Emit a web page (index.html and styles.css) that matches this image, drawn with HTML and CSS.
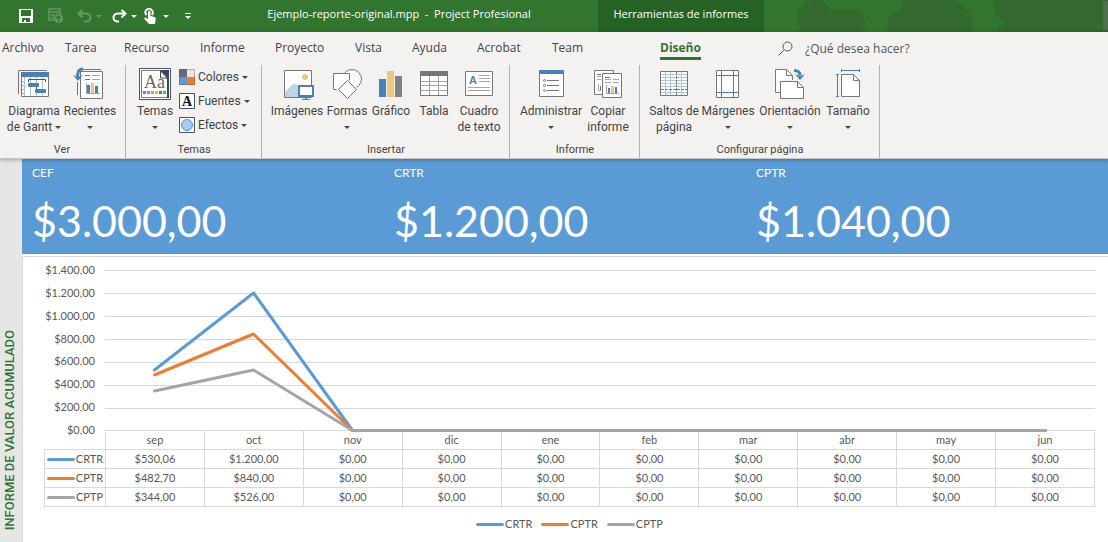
FILE: index.html
```html
<!DOCTYPE html>
<html lang="es">
	<head>
		<meta charset="utf-8">
		<title>Ejemplo-reporte-original.mpp - Project Profesional</title>
		<link rel="stylesheet" href="styles.css">
	</head>
	<body>
		<!--barra de titulo-->
		<header class="titlebar">
			<svg class="deco" width="344" height="32" viewBox="0 0 344 32">
				<g fill="#31692f">
					<circle cx="51" cy="18" r="18"/>
					<circle cx="88" cy="23" r="13"/>
					<path d="M38 28l28-18h20v22H36z"/>
					<path d="M138 0h50c14 4 22 16 20 32h-84c-2-12 0-18 8-19 5-3 10-8 6-13z"/>
					<path d="M229 0c0 9 2 14 6 18l6 5-6 4-2 5h111V0z"/>
				</g>
				<path d="M339 1h5v29h-5z" fill="#4f704f"/>
			</svg>
			<div class="quick">
				<button aria-label="Guardar"><svg width="14" height="14" viewBox="0 0 14 14"><path fill="#fff" fill-rule="evenodd" d="M0 0h14v14H0zM2 1v6h10V1zM3 9v4h2v-2h2v2h4V9z"/></svg></button>
				<button class="off" aria-label="Publicar"><svg width="16" height="16" viewBox="0 0 16 16"><path fill="none" stroke="#fff" stroke-width="1.5" d="M6 12H1V1h11v5M1 4h11M3 7h4M3 9.500h3"/><circle cx="10.500" cy="10.500" r="4.500" fill="#fff"/><path d="M10.500 14V8.500M8 10.500l2.500-2.500 2.500 2.500" stroke="#31752f" stroke-width="1.500" fill="none"/></svg></button>
				<button class="off" aria-label="Deshacer"><svg width="15" height="14" viewBox="0 0 15 14"><path fill="none" stroke="#fff" stroke-width="2" d="M5.500 1L1.500 4.500l4 4M1.500 4.500H9c6 0 6 8 0 8H7"/></svg><i class="caret"></i></button>
				<button aria-label="Rehacer"><svg width="15" height="14" viewBox="0 0 15 14"><path fill="none" stroke="#fff" stroke-width="2" d="M9.500 1l4 3.500-4 4M13.500 4.500H6c-6 0-6 8 0 8h1"/></svg><i class="caret"></i></button>
				<button aria-label="Modo mouse o táctil"><svg width="15" height="16" viewBox="0 0 15 16"><path fill="none" stroke="#fff" stroke-width="2" d="M2.500 7C0 4 2 1 5 1s5 3 3 6"/><path fill="#fff" d="M4 4c0-1.500 2.500-1.500 2.500 0v4l4 1c1 .3 1.500 1 1.200 2L11 16H5l-4.500-5c-.6-1 .8-2 1.800-1L4 11z"/></svg><i class="caret"></i></button>
				<button aria-label="Personalizar"><svg width="6" height="7" viewBox="0 0 6 7"><path fill="#fff" d="M0 0h6v1H0zM0 3h6L3 6z"/></svg></button>
			</div>
			<div class="doc">Ejemplo-reporte-original.mpp&nbsp; -&nbsp; Project Profesional</div>
			<div class="context">Herramientas de informes</div>
		</header>

		<!--cinta-->
		<div class="ribbon">
			<nav class="tabs">
				<a href="#">Archivo</a>
				<a href="#">Tarea</a>
				<a href="#">Recurso</a>
				<a href="#">Informe</a>
				<a href="#">Proyecto</a>
				<a href="#">Vista</a>
				<a href="#">Ayuda</a>
				<a href="#">Acrobat</a>
				<a href="#">Team</a>
				<a href="#" class="active">Diseño</a>
				<label class="search">
					<svg width="15" height="15" viewBox="0 0 15 15" fill="none" stroke="#555"><circle cx="9.500" cy="5.500" r="4.500"/><path d="M6 9l-5.500 5.500"/></svg>
					<input type="text" placeholder="¿Qué desea hacer?" aria-label="¿Qué desea hacer?">
				</label>
			</nav>
			<div class="groups">
				<section class="group">
					<div class="tools ver">
						<button class="tool">
							<svg width="36" height="36" viewBox="0 0 36 36"><path d="M2.500 27V3.500H31" fill="none" stroke="#777"/><path d="M5.500 5.500h27v24h-27z" fill="#fff" stroke="#777"/><path d="M5 5h28v5H5z" fill="#4a80b9"/><path d="M8.500 10v19M6 14.500h2M6 18.500h2M6 22.500h2M6 26.500h2M14.500 10v19M20.500 10v19M26.500 10v19" stroke="#a9c4e0"/><path d="M12.500 15v-2.500h17V15M20.500 20v2" fill="none" stroke="#555"/><rect x="12" y="16" width="11" height="4" rx="1" fill="#4a80b9"/><rect x="19" y="22" width="11" height="4" rx="1" fill="#4a80b9"/></svg>
							<span>Diagrama<br>de Gantt <i class="caret"></i></span>
						</button>
						<button class="tool">
							<svg width="36" height="36" viewBox="0 0 36 36"><path d="M5.500 15v13M11 2.500h18" stroke="#777"/><path d="M8.500 4.500h22v27h-22z" fill="#fff" stroke="#777"/><path d="M13 8.500h5M13 12.500h5" stroke="#4a80b9"/><path d="M20 8.500h8M20 12.500h8M14.500 16v10.500H28" fill="none" stroke="#a6a6a6"/><path d="M15 18h3v8h-3zM23 19h3v7h-3z" fill="#4a80b9"/><path d="M19 16h3v10h-3z" fill="#ecc77c"/><path d="M11 2C6 2 5 6 6 12" fill="none" stroke="#4a80b9" stroke-width="3"/><path d="M1 8l5 6 5-6-5 2z" fill="#4a80b9"/></svg>
							<span>Recientes<br><i class="caret"></i></span>
						</button>
					</div>
					<h2>Ver</h2>
				</section>
				<section class="group">
					<div class="tools temas">
						<button class="tool">
							<svg width="36" height="36" viewBox="0 0 36 36"><path d="M2.500 1.500h31v31h-31z" fill="#fff" stroke="#44546a"/><path d="M4.500 3.500h19l8 8v19h-27z" fill="#fff" stroke="#777"/><path d="M23 3h9v28h-2V12z" fill="#3b4757"/><path d="M23.500 4v7h7z" fill="#fff" stroke="#3b4757"/><text x="7" y="21" font-family="Liberation Serif, serif" font-size="18" fill="#666">Aa</text><path d="M6 24h3v3H6z" fill="#4a90d0"/><path d="M10 24h3v3h-3z" fill="#ed7d31"/><path d="M14 24h3v3h-3z" fill="#a5a5a5"/><path d="M18 24h3v3h-3z" fill="#ffc000"/><path d="M22 24h3v3h-3z" fill="#4472c4"/><path d="M26 24h3v3h-3z" fill="#70ad47"/></svg>
							<span>Temas<br><i class="caret"></i></span>
						</button>
						<div class="small">
							<button><svg width="16" height="16" viewBox="0 0 16 16"><path d="M0 0h8v8H0z" fill="#666b73"/><path d="M8 0h8v8H8z" fill="#e7e6e6"/><path d="M0 8h8v8H0z" fill="#5b9bd5"/><path d="M8 8h8v8H8z" fill="#ed7d31"/><path d="M.5.5h15v15H.5z" fill="none" stroke="#555" stroke-opacity=".4"/></svg><span>Colores</span><i class="caret"></i></button>
							<button><svg width="16" height="16" viewBox="0 0 16 16"><path d="M.5.5h15v15H.5z" fill="#fff" stroke="#44546a"/><text x="3" y="13" font-family="Liberation Serif, serif" font-weight="bold" font-size="14" fill="#111">A</text></svg><span>Fuentes</span><i class="caret"></i></button>
							<button><svg width="16" height="16" viewBox="0 0 16 16"><path d="M.5.5h15v15H.5z" fill="#fff" stroke="#44546a"/><circle cx="8" cy="8" r="5.500" fill="#a9cdf0" stroke="#4a90d0"/></svg><span>Efectos</span><i class="caret"></i></button>
						</div>
					</div>
					<h2>Temas</h2>
				</section>
				<section class="group">
					<div class="tools insertar">
						<button class="tool">
							<svg width="36" height="36" viewBox="0 0 36 36"><path d="M5.500 3.500h27v27h-27z" fill="#fff" stroke="#777"/><circle cx="26" cy="10" r="3" fill="#ecc77c"/><path d="M6 30v-5l8-8 3 0 4 5v8z" fill="#bfd3e9"/><path d="M20 19h14v10H20z" fill="#fff" stroke="#4a80b9" stroke-width="2"/><path d="M26 30h2v2h3v1h-8v-1h3z" fill="#4a80b9"/></svg>
							<span>Imágenes</span>
						</button>
						<button class="tool">
							<svg width="36" height="36" viewBox="0 0 36 36" fill="#fff" stroke="#4a80b9"><circle cx="23" cy="12" r="9.500"/><path d="M4.500 6.500h16v16h-16z"/><path d="M18.500 13.500l9 9-9 9-9-9z" stroke="#f3f2f1" stroke-width="3"/><path d="M18.500 13.500l9 9-9 9-9-9z"/></svg>
							<span>Formas<br><i class="caret"></i></span>
						</button>
						<button class="tool">
							<svg width="36" height="36" viewBox="0 0 36 36"><path d="M6 12h7v18H6z" fill="#4a80b9"/><path d="M14 4h7v26h-7z" fill="#ecc77c"/><path d="M22 9h7v21h-7z" fill="#808080"/></svg>
							<span>Gráfico</span>
						</button>
						<button class="tool">
							<svg width="36" height="36" viewBox="0 0 36 36"><path d="M4.500 4.500h27v24h-27z" fill="#fff" stroke="#777"/><path d="M4 4h28v5H4z" fill="#777"/><path d="M5 14.500h26M5 18.500h26M5 23.500h26M13.500 9v19M22.500 9v19" stroke="#a6a6a6"/></svg>
							<span>Tabla</span>
						</button>
						<button class="tool">
							<svg width="36" height="36" viewBox="0 0 36 36"><path d="M4.500 4.500h27v24h-27z" fill="#fff" stroke="#777"/><text x="8" y="17" font-family="Liberation Sans, sans-serif" font-weight="bold" font-size="11" fill="#4a80b9">A</text><path d="M18 8.500h11M18 11.500h11M18 14.500h11M7 20.500h22M7 23.500h22" stroke="#a6a6a6"/></svg>
							<span>Cuadro<br>de texto</span>
						</button>
					</div>
					<h2>Insertar</h2>
				</section>
				<section class="group">
					<div class="tools informe">
						<button class="tool">
							<svg width="36" height="36" viewBox="0 0 36 36"><path d="M6.500 3.500h24v26h-24z" fill="#fff" stroke="#777"/><path d="M6 3h25v4H6z" fill="#4a80b9"/><path d="M14 13.500h12M14 18.500h12M14 23.500h12" stroke="#777"/><g fill="#fff" stroke="#777"><circle cx="11.500" cy="13.500" r="1"/><circle cx="11.500" cy="18.500" r="1"/><circle cx="11.500" cy="23.500" r="1"/></g></svg>
							<span>Administrar<br><i class="caret"></i></span>
						</button>
						<button class="tool">
							<svg width="36" height="36" viewBox="0 0 36 36"><path d="M4.500 3.500h19v24h-19z" fill="#fff" stroke="#777"/><path d="M7 7.500h4M10.500 23v-4" stroke="#4a80b9"/><path d="M7 9.500h4M7 12.500h4M8.500 17v6.500H11" fill="none" stroke="#a6a6a6"/><path d="M12.500 6.500h19v24h-19z" fill="#fff" stroke="#777"/><path d="M15 10.500h5" stroke="#4a80b9"/><path d="M15 12.500h6M23 12.500h6M15 15.500h6M23 15.500h6M16.500 18v8.500H29" fill="none" stroke="#a6a6a6"/><path d="M18 21h2v5h-2zM25 20h2v6h-2z" fill="#4a80b9"/><path d="M21 19h3v7h-3z" fill="#ecc77c"/></svg>
							<span>Copiar<br>informe</span>
						</button>
					</div>
					<h2>Informe</h2>
				</section>
				<section class="group">
					<div class="tools pagina">
						<button class="tool">
							<svg width="36" height="36" viewBox="0 0 36 36"><path d="M4.500 4.500h27v24h-27z" fill="#fff" stroke="#777"/><path d="M5 7.500h26M5 10.500h26M5 13.500h26M5 16.500h26M5 19.500h26M5 25.500h26M9.500 5v23M14.500 5v23M25.500 5v23" stroke="#a9c4e0"/><path d="M20.500 5v23M5 22.500h26" stroke="#777" stroke-dasharray="3 1"/></svg>
							<span>Saltos de<br>página</span>
						</button>
						<button class="tool">
							<svg width="36" height="36" viewBox="0 0 36 36"><path d="M6.500 3.500h22v27h-22z" fill="#fff" stroke="#777"/><path d="M11.500 4v26M23.500 4v26M7 8.500h21M7 25.500h21" stroke="#4a80b9"/></svg>
							<span>Márgenes<br><i class="caret"></i></span>
						</button>
						<button class="tool">
							<svg width="36" height="36" viewBox="0 0 36 36"><path d="M3.500 2.500h11l6 6v17h-17z" fill="#fff" stroke="#777"/><path d="M14.500 2.500v6h6" fill="none" stroke="#777"/><path d="M7 13h19v4h-19z" fill="#f3f2f1"/><path d="M8.500 14.500h17l6 6v11h-23z" fill="#fff" stroke="#777"/><path d="M25.500 14.500v6h6" fill="none" stroke="#777"/><path d="M22 3.500c4 0 6 1 6 5" fill="none" stroke="#4a80b9" stroke-width="3"/><path d="M23 7l5 6 5-6-5 2z" fill="#4a80b9"/></svg>
							<span>Orientación<br><i class="caret"></i></span>
						</button>
						<button class="tool">
							<svg width="36" height="36" viewBox="0 0 36 36"><path d="M11.500 7.500h12l6 6v16h-18z" fill="#fff" stroke="#777"/><path d="M23.500 7.500v6h6" fill="none" stroke="#777"/><path d="M11.500 2v3M29.500 2v3M11 3.500h18M6 7.500h3M6 29.500h3M7.500 7v22" stroke="#4a80b9"/></svg>
							<span>Tamaño<br><i class="caret"></i></span>
						</button>
					</div>
					<h2>Configurar página</h2>
				</section>
			</div>
		</div>

		<!--informe-->
		<main class="report">
			<aside class="side"><span>INFORME DE VALOR ACUMULADO</span></aside>
			<div class="content">
				<div class="cards">
					<div class="card"><h3>CEF</h3><p>$3.000,00</p></div>
					<div class="card"><h3>CRTR</h3><p>$1.200,00</p></div>
					<div class="card"><h3>CPTR</h3><p>$1.040,00</p></div>
				</div>
				<div class="chart">
					<div class="plot">
						<div class="axis">
							<span>$1.400,00</span>
							<span>$1.200,00</span>
							<span>$1.000,00</span>
							<span>$800,00</span>
							<span>$600,00</span>
							<span>$400,00</span>
							<span>$200,00</span>
							<span>$0,00</span>
						</div>
						<svg class="lines" viewBox="0 0 990 160" preserveAspectRatio="none">
							<path class="grid" d="M0 .5h990M0 23.500h990M0 46.500h990M0 69.500h990M0 92.500h990M0 115.500h990M0 138.500h990"/>
							<polyline stroke="#5b9bd5" points="49.500,100 148.500,23 247.500,160.500 940.500,160.500"/>
							<polyline stroke="#ed7d31" points="49.500,105 148.500,64 247.500,160.500 940.500,160.500"/>
							<polyline stroke="#a5a5a5" points="49.500,121 148.500,100 247.500,160.500 940.500,160.500"/>
						</svg>
					</div>
					<table>
						<thead>
							<tr><td class="empty"></td><th>sep</th><th>oct</th><th>nov</th><th>dic</th><th>ene</th><th>feb</th><th>mar</th><th>abr</th><th>may</th><th>jun</th></tr>
						</thead>
						<tbody>
							<tr><th><span class="key blue">CRTR</span></th><td>$530,06</td><td>$1.200,00</td><td>$0,00</td><td>$0,00</td><td>$0,00</td><td>$0,00</td><td>$0,00</td><td>$0,00</td><td>$0,00</td><td>$0,00</td></tr>
							<tr><th><span class="key orange">CPTR</span></th><td>$482,70</td><td>$840,00</td><td>$0,00</td><td>$0,00</td><td>$0,00</td><td>$0,00</td><td>$0,00</td><td>$0,00</td><td>$0,00</td><td>$0,00</td></tr>
							<tr><th><span class="key gray">CPTP</span></th><td>$344,00</td><td>$526,00</td><td>$0,00</td><td>$0,00</td><td>$0,00</td><td>$0,00</td><td>$0,00</td><td>$0,00</td><td>$0,00</td><td>$0,00</td></tr>
						</tbody>
					</table>
					<div class="legend">
						<span class="key blue">CRTR</span>
						<span class="key orange">CPTR</span>
						<span class="key gray">CPTP</span>
					</div>
				</div>
			</div>
		</main>
	</body>
</html>
```
FILE: styles.css
```css
*{
	box-sizing: border-box;
}
html,body{
	height: 100%;
}
body{
	margin: 0;
	display: flex;
	flex-direction: column;
	font-family: "Open Sans", "Noto Sans", sans-serif;
	font-size: 12px;
	color: #444;
	background: #fff;
}
button{
	border: none;
	background: none;
	padding: 0;
	font: inherit;
	color: inherit;
}
h2,h3,p{
	margin: 0;
	font-weight: normal;
}
svg{
	display: block;
	flex: none;
}
.caret{
	display: inline-block;
	border: 3px solid transparent;
	border-top-color: currentColor;
	border-bottom: none;
	vertical-align: middle;
}

/* barra de titulo */
.titlebar{
	position: relative;
	display: grid;
	grid-template-columns: 200px 398px 166px;
	height: 32px;
	flex: none;
	line-height: 28px;
	font-size: 11px;
	color: #fff;
	background: #31752f;
}
.deco{
	position: absolute;
	right: 0;
	top: 0;
}
.quick{
	display: grid;
	grid-template-columns: 29px 29px 35px 32px 41px 6px;
	align-items: center;
	padding-left: 19px;
}
.quick button{
	display: flex;
	align-items: center;
	gap: 4px;
}
.quick .off{
	opacity: .25;
}
.doc{
	text-align: center;
}
.context{
	position: relative;
	text-align: center;
	background: #256325;
}

/* cinta */
.ribbon{
	position: relative;
	z-index: 2;
	flex: none;
	background: #f3f2f1;
	border-bottom: 1px solid #c8c6c4;
	box-shadow: 0 1px 4px rgba(0,0,0,0.3);
}
.tabs{
	display: grid;
	grid-template-columns: 63px 59px 76px 75px 80px 57px 65px 75px 108px 118px 1fr;
	height: 33px;
	padding-left: 2px;
	line-height: 32px;
}
.tabs a{
	color: inherit;
	text-decoration: none;
}
.tabs .active{
	justify-self: start;
	height: 28px;
	font-weight: bold;
	color: #31752f;
	border-bottom: 3px solid #31752f;
}
.search{
	display: flex;
	align-items: center;
	gap: 12px;
}
.search input{
	flex: 1;
	border: none;
	padding: 0;
	background: none;
	font: inherit;
}
.search input::placeholder{
	color: #555;
	opacity: 1;
}
.groups{
	display: flex;
	font-family: Roboto, "Open Sans", sans-serif;
}
.group{
	border-right: 1px solid #b3b0ad;
	padding: 0 7px 0 8px;
}
.group:first-child{
	padding-left: 6px;
}
.group h2{
	font-size: 11px;
	line-height: 16px;
	text-align: center;
}
.tools{
	display: grid;
	height: 77px;
	padding-top: 2px;
}
.ver{
	grid-template-columns: 56px 56px;
}
.temas{
	grid-template-columns: 42px 78px;
}
.insertar{
	grid-template-columns: 54px 46px 42px 44px 46px;
}
.informe{
	grid-template-columns: 66px 48px;
}
.pagina{
	grid-template-columns: 52px 56px 68px 48px;
}
.tool{
	display: flex;
	flex-direction: column;
	align-items: center;
	line-height: 16px;
	white-space: nowrap;
}
.small{
	padding-left: 3px;
	margin-top: -2px;
}
.small button{
	display: flex;
	align-items: center;
	gap: 3px;
	height: 24px;
}

/* informe */
.report{
	flex: 1;
	display: flex;
	font-family: Lato, "Open Sans", sans-serif;
}
.side{
	width: 22px;
	flex: none;
	display: flex;
	flex-direction: column;
	justify-content: flex-end;
	align-items: center;
	padding: 0 4px 12px 0;
	background: #e6e6e6;
	color: #31752f;
	font-family: Roboto, "Open Sans", sans-serif;
	font-size: 13px;
	font-weight: 500;
}
.side span{
	writing-mode: vertical-rl;
	transform: rotate(180deg);
	white-space: nowrap;
}
.content{
	flex: 1;
	display: flex;
	flex-direction: column;
	gap: 2px;
}
.cards{
	display: grid;
	grid-template-columns: repeat(3, 1fr);
	height: 95px;
	color: #fff;
	background: #5b9bd5;
}
.card{
	padding: 6px 0 0 10px;
}
.card h3{
	font-size: 12px;
	line-height: 16px;
}
.card p{
	font-size: 43px;
	line-height: 80px;
}
.chart{
	flex: 1;
	padding: 13px 13px 0 21px;
	border: 1px solid #d9d9d9;
	border-right: none;
	border-bottom: none;
	font-size: 11px;
	color: #595959;
}
.plot{
	display: flex;
	height: 160px;
}
.axis{
	width: 61px;
	flex: none;
	height: 176px;
	margin-top: -8px;
	padding-right: 10px;
	display: flex;
	flex-direction: column;
	justify-content: space-between;
	line-height: 16px;
	text-align: right;
}
.lines{
	flex: 1;
	min-width: 0;
	height: 160px;
	position: relative;
	overflow: visible;
}
.lines polyline{
	fill: none;
	stroke-width: 3;
	stroke-linecap: round;
	stroke-linejoin: round;
	vector-effect: non-scaling-stroke;
}
.grid{
	stroke: #d9d9d9;
	vector-effect: non-scaling-stroke;
}
table{
	width: 100%;
	table-layout: fixed;
	border-collapse: collapse;
	text-align: center;
}
th,td{
	height: 19px;
	padding: 0;
	line-height: 16px;
	font-weight: normal;
	border: 1px solid #d9d9d9;
}
.empty{
	width: 61px;
	border-top: none;
	border-left: none;
}
.key{
	display: flex;
	align-items: center;
	justify-content: center;
}
.key::before{
	content: "";
	width: 28px;
	height: 3px;
	border-radius: 2px;
	margin-right: 1px;
	background: currentColor;
}
.blue::before{
	background: #5b9bd5;
}
.orange::before{
	background: #ed7d31;
}
.gray::before{
	background: #a5a5a5;
}
.legend{
	display: flex;
	justify-content: center;
	gap: 9px;
	margin-top: 9px;
	line-height: 16px;
}
```
